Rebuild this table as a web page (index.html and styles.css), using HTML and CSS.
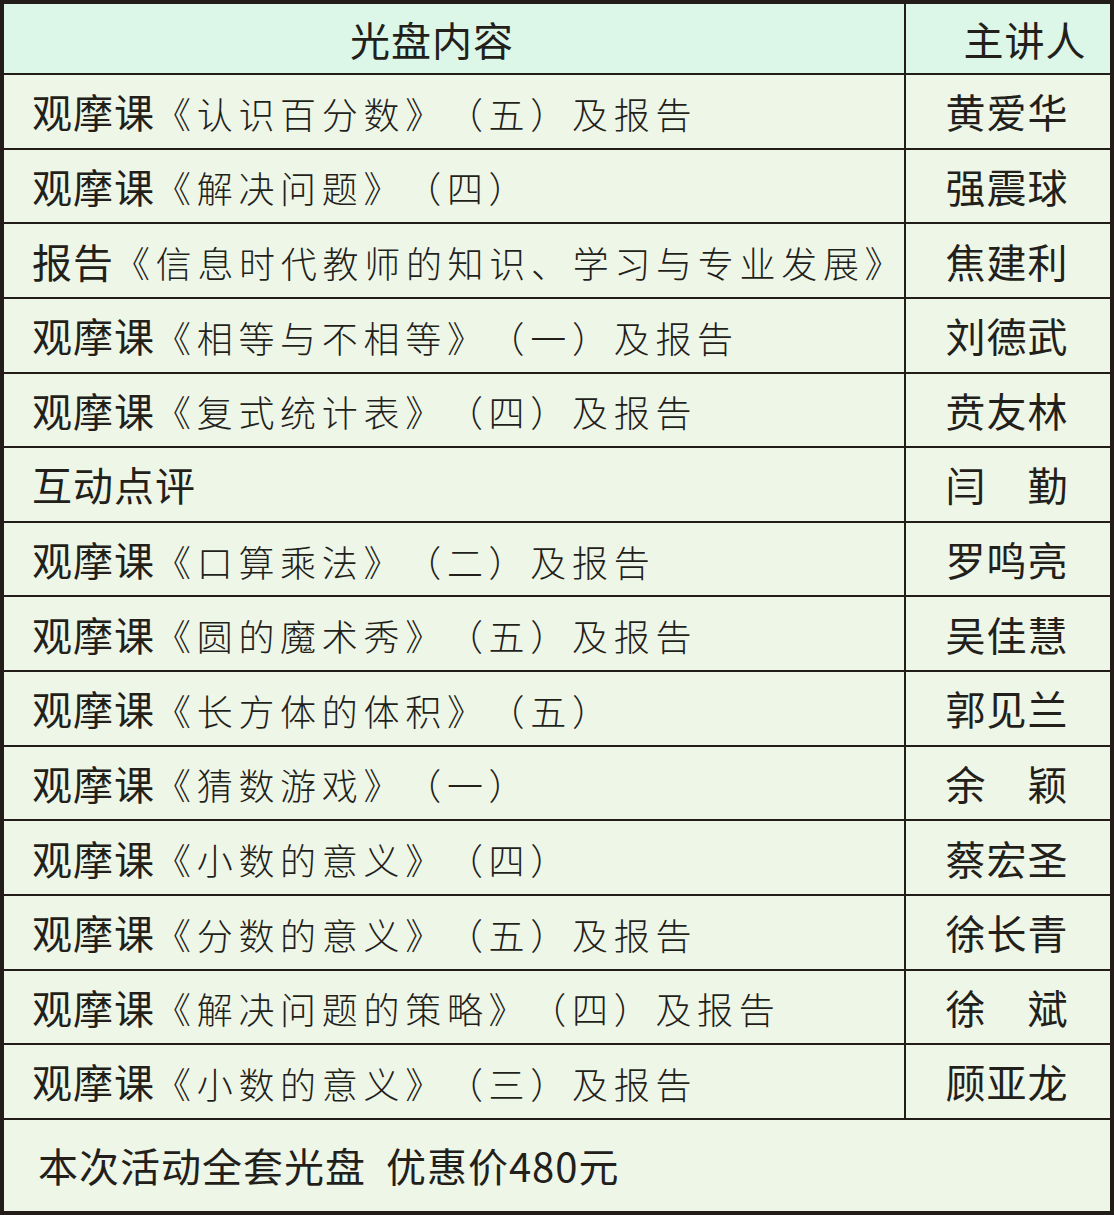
FILE: index.html
```html
<!DOCTYPE html>
<html lang="zh-CN">
<head>
<meta charset="utf-8">
<title>光盘内容</title>
<link rel="stylesheet" href="styles.css">
</head>
<body>
<div class="sheet">
  <div class="cell head head-main">光盘内容</div>
  <div class="cell head head-side">主讲人</div>

  <div class="cell item"><b>观摩课</b><span class="t">《认识百分数》（五）及报告</span></div>
  <div class="cell name">黄爱华</div>

  <div class="cell item"><b>观摩课</b><span class="t">《解决问题》（四）</span></div>
  <div class="cell name">强震球</div>

  <div class="cell item"><b>报告</b><span class="t">《信息时代教师的知识、学习与专业发展》</span></div>
  <div class="cell name">焦建利</div>

  <div class="cell item"><b>观摩课</b><span class="t">《相等与不相等》（一）及报告</span></div>
  <div class="cell name">刘德武</div>

  <div class="cell item"><b>观摩课</b><span class="t">《复式统计表》（四）及报告</span></div>
  <div class="cell name">贲友林</div>

  <div class="cell item"><b>互动点评</b></div>
  <div class="cell name">闫　勤</div>

  <div class="cell item"><b>观摩课</b><span class="t">《口算乘法》（二）及报告</span></div>
  <div class="cell name">罗鸣亮</div>

  <div class="cell item"><b>观摩课</b><span class="t">《圆的魔术秀》（五）及报告</span></div>
  <div class="cell name">吴佳慧</div>

  <div class="cell item"><b>观摩课</b><span class="t">《长方体的体积》（五）</span></div>
  <div class="cell name">郭见兰</div>

  <div class="cell item"><b>观摩课</b><span class="t">《猜数游戏》（一）</span></div>
  <div class="cell name">余　颖</div>

  <div class="cell item"><b>观摩课</b><span class="t">《小数的意义》（四）</span></div>
  <div class="cell name">蔡宏圣</div>

  <div class="cell item"><b>观摩课</b><span class="t">《分数的意义》（五）及报告</span></div>
  <div class="cell name">徐长青</div>

  <div class="cell item"><b>观摩课</b><span class="t">《解决问题的策略》（四）及报告</span></div>
  <div class="cell name">徐　斌</div>

  <div class="cell item"><b>观摩课</b><span class="t">《小数的意义》（三）及报告</span></div>
  <div class="cell name">顾亚龙</div>

  <div class="cell foot">本次活动全套光盘&nbsp;&nbsp;优惠价480元</div>
</div>
</body>
</html>
```

FILE: styles.css
```css
html, body {
  margin: 0;
  padding: 0;
  background: #eef6e8;
}

.sheet {
  width: 1114px;
  height: 1215px;
  box-sizing: border-box;
  border: 4px solid #221d19;
  background: #221d19;
  display: grid;
  grid-template-columns: 900px 204px;
  grid-template-rows: 69px repeat(14, 72.64px) 91px;
  column-gap: 2px;
  row-gap: 2px;
  font-family: "Noto Sans CJK SC", "Noto Sans", sans-serif;
  color: #231f1b;
  text-spacing-trim: space-all;
}

.cell {
  background: #eef6e8;
  display: flex;
  align-items: center;
  font-size: 40px;
  line-height: 1;
  white-space: nowrap;
}

.head {
  background: #dcf7e7;
  font-weight: 400;
  letter-spacing: 1px;
}

.head-main {
  justify-content: center;
  padding-right: 44px;
}

.head-side {
  justify-content: center;
  padding-left: 34px;
}

.item {
  padding-left: 28px;
}

.item b {
  font-weight: 400;
  letter-spacing: 1px;
}

.item .t {
  font-weight: 300;
  font-size: 36px;
  letter-spacing: 5.7px;
  padding-top: 3px;
}

.name {
  justify-content: center;
  font-weight: 400;
  letter-spacing: 1px;
  padding-right: 2px;
}

.foot {
  grid-column: 1 / -1;
  padding-left: 34px;
  font-weight: 400;
  letter-spacing: 1px;
}
```
